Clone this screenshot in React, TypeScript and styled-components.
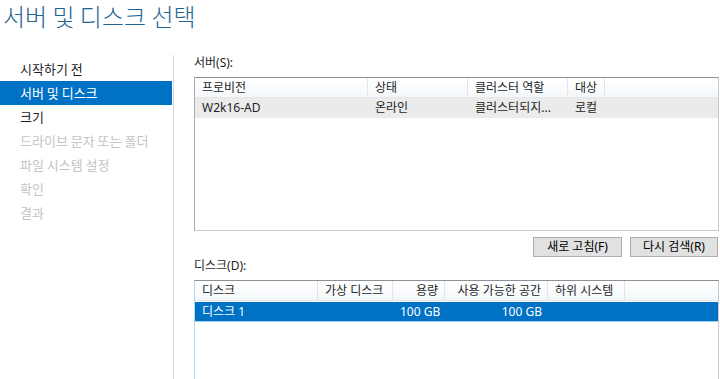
import React from "react";
import styled, { createGlobalStyle } from "styled-components";

const Global = createGlobalStyle`
  html, body { margin: 0; padding: 0; background: #ffffff; }
  body { overflow: hidden; }
  * { box-sizing: border-box; }
`;

const FONT = `"Noto Sans", "Noto Sans CJK KR", sans-serif`;

const Page = styled.div`
  width: 720px;
  height: 379px;
  overflow: hidden;
  display: flex;
  flex-direction: column;
  font-family: ${FONT};
  color: #1e1e1e;
  background: #fff;
`;

const Title = styled.h1`
  margin: 0;
  height: 55px;
  padding: 0 0 0 3px;
  font-family: "Noto Sans CJK KR", sans-serif;
  font-size: 24px;
  font-weight: 300;
  line-height: 32px;
  color: #1f6491;
`;

const Body = styled.div`
  flex: 1;
  display: flex;
  min-height: 0;
`;

const Nav = styled.nav`
  width: 174px;
  flex: none;
  border-right: 1px solid #d9d9d9;
  padding-top: 2px;
  display: flex;
  flex-direction: column;
`;

const NavItem = styled.div<{ $state: "normal" | "active" | "disabled" }>`
  height: 24px;
  line-height: 24px;
  padding-left: 20px;
  margin-right: 1px;
  font-family: "Noto Sans CJK KR", sans-serif;
  font-size: 13px;
  white-space: nowrap;
  background: ${(p) => (p.$state === "active" ? "#0072c6" : "transparent")};
  color: ${(p) =>
    p.$state === "active" ? "#ffffff" : p.$state === "disabled" ? "#c4c4c4" : "#1e1e1e"};
`;

const Main = styled.main`
  flex: 1;
  padding: 0 1px 0 20px;
  display: flex;
  flex-direction: column;
  min-width: 0;
`;

const Label = styled.div<{ $mt: number }>`
  margin-top: ${(p) => p.$mt}px;
  height: 16px;
  line-height: 16px;
  font-size: 12px;
  font-family: ${FONT};
  color: #1e1e1e;
`;

const ListBox = styled.div<{ $h: number; $focused?: boolean }>`
  margin-top: 6px;
  height: ${(p) => p.$h}px;
  flex: none;
  border: 1px solid #c5c8cf;
  border-top-color: #8c9099;
  border-left-color: ${(p) => (p.$focused ? "#b6d6f0" : "#a9acb3")};
  background: #fff;
  overflow: hidden;
`;

const HeaderRow = styled.div`
  display: flex;
  height: 20px;
  background: linear-gradient(#ffffff, #f4f7fa);
  border-bottom: 1px solid #e4e7eb;
`;

const HeaderCell = styled.div<{ $w: number; $right?: boolean }>`
  width: ${(p) => p.$w}px;
  flex: none;
  border-right: 1px solid #e3e5e8;
  padding: 0 6px 0 7px;
  text-align: ${(p) => (p.$right ? "right" : "left")};
  line-height: 19px;
  font-size: 12px;
  white-space: nowrap;
  overflow: hidden;
  color: #1e1e1e;
`;

const DataRow = styled.div<{ $sel: "gray" | "blue" }>`
  display: flex;
  height: 20px;
  margin-top: ${(p) => (p.$sel === "blue" ? 1 : 0)}px;
  background: ${(p) => (p.$sel === "blue" ? "#0072c6" : "#ebebeb")};
  color: ${(p) => (p.$sel === "blue" ? "#ffffff" : "#1e1e1e")};
  border-bottom: ${(p) => (p.$sel === "blue" ? "1px solid #9fd0f0" : "none")};
`;

const DataCell = styled.div<{ $w: number; $right?: boolean }>`
  width: ${(p) => p.$w}px;
  flex: none;
  padding: 0 6px 0 7px;
  text-align: ${(p) => (p.$right ? "right" : "left")};
  line-height: 20px;
  font-size: 12px;
  white-space: nowrap;
  overflow: hidden;
`;

const ButtonRow = styled.div`
  margin-top: 6px;
  display: flex;
  justify-content: flex-end;
  gap: 8px;
  padding-right: 1px;
`;

const Button = styled.button<{ $w: number }>`
  width: ${(p) => p.$w}px;
  height: 20px;
  padding: 0;
  background: #e1e1e1;
  border: 1px solid #adadad;
  font-family: ${FONT};
  font-size: 12px;
  line-height: 18px;
  color: #000;
`;

type Col = { title: string; w: number; right?: boolean };

const serverCols: Col[] = [
  { title: "프로비전", w: 173 },
  { title: "상태", w: 100 },
  { title: "클러스터 역할", w: 100 },
  { title: "대상", w: 37 },
];

const diskCols: Col[] = [
  { title: "디스크", w: 123 },
  { title: "가상 디스크", w: 75 },
  { title: "용량", w: 52, right: true },
  { title: "사용 가능한 공간", w: 103, right: true },
  { title: "하위 시스템", w: 77 },
];

const navItems: { label: string; state: "normal" | "active" | "disabled" }[] = [
  { label: "시작하기 전", state: "normal" },
  { label: "서버 및 디스크", state: "active" },
  { label: "크기", state: "normal" },
  { label: "드라이브 문자 또는 폴더", state: "disabled" },
  { label: "파일 시스템 설정", state: "disabled" },
  { label: "확인", state: "disabled" },
  { label: "결과", state: "disabled" },
];

export default function App() {
  return (
    <Page>
      <Global />
      <Title>서버 및 디스크 선택</Title>
      <Body>
        <Nav>
          {navItems.map((n) => (
            <NavItem key={n.label} $state={n.state}>
              {n.label}
            </NavItem>
          ))}
        </Nav>
        <Main>
          <Label $mt={0}>서버(S):</Label>
          <ListBox $h={154}>
            <HeaderRow>
              {serverCols.map((c) => (
                <HeaderCell key={c.title} $w={c.w} $right={c.right}>
                  {c.title}
                </HeaderCell>
              ))}
            </HeaderRow>
            <DataRow $sel="gray">
              <DataCell $w={173}>W2k16-AD</DataCell>
              <DataCell $w={100}>온라인</DataCell>
              <DataCell $w={100}>클러스터되지...</DataCell>
              <DataCell $w={60}>로컬</DataCell>
            </DataRow>
          </ListBox>
          <ButtonRow>
            <Button $w={89}>새로 고침(F)</Button>
            <Button $w={88}>다시 검색(R)</Button>
          </ButtonRow>
          <Label $mt={1}>디스크(D):</Label>
          <ListBox $h={140} $focused>
            <HeaderRow>
              {diskCols.map((c) => (
                <HeaderCell key={c.title} $w={c.w} $right={c.right}>
                  {c.title}
                </HeaderCell>
              ))}
            </HeaderRow>
            <DataRow $sel="blue">
              <DataCell $w={123}>디스크 1</DataCell>
              <DataCell $w={75}></DataCell>
              <DataCell $w={52} $right>100 GB</DataCell>
              <DataCell $w={103} $right>100 GB</DataCell>
              <DataCell $w={77}></DataCell>
            </DataRow>
          </ListBox>
        </Main>
      </Body>
    </Page>
  );
}
